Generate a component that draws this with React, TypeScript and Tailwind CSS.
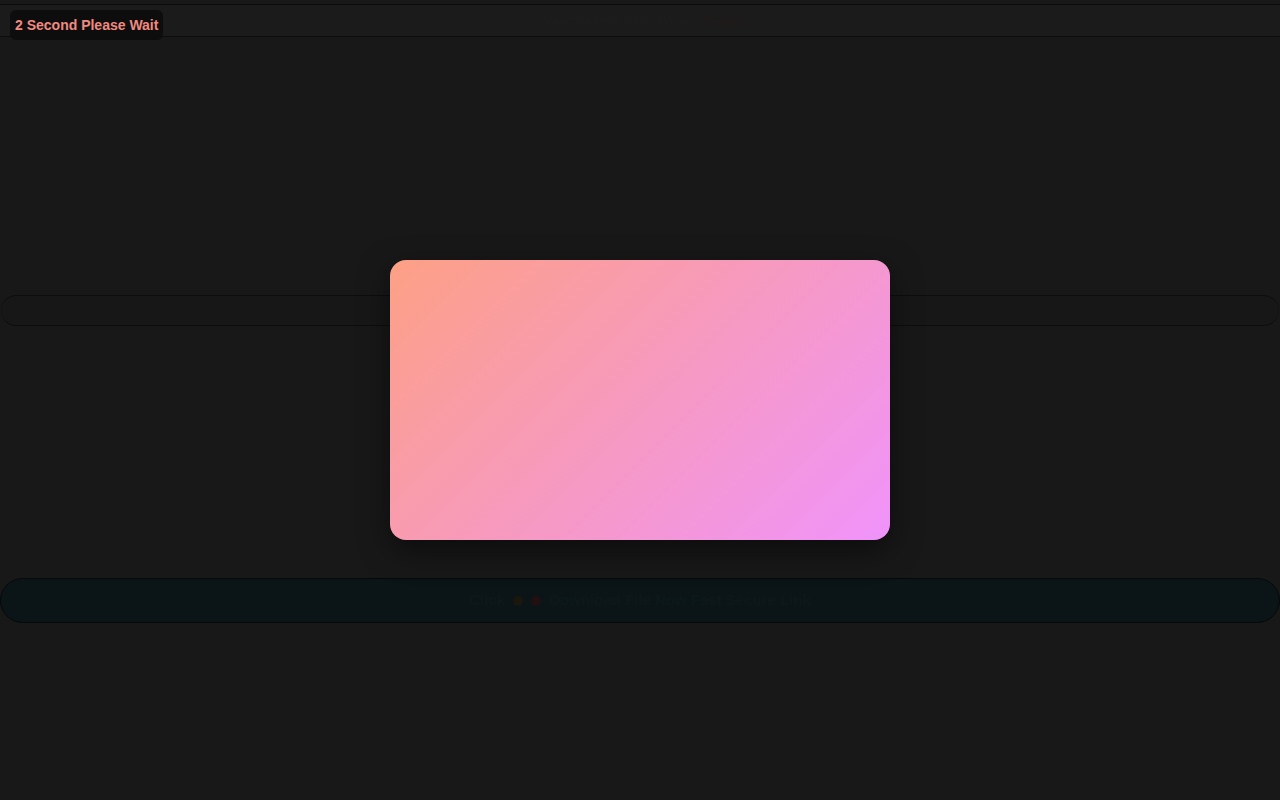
import React from 'react'

const App: React.FC = () => {
  return (
    <div
      className="relative min-h-screen w-full bg-[#181818] text-[#1f1f1f]"
      style={{ fontFamily: '"Liberation Sans", Arial, sans-serif' }}
    >
      {/* header */}
      <div className="pt-[4px]">
        <div className="flex h-[33px] items-center justify-center border-y border-[#0c0c0c] bg-[#1b1b1b] text-[13px] text-[#1d1d1d]">
          <span>Download will start shortly</span>
          <span className="ml-1 text-[#221a1a]">· Ready</span>
        </div>
      </div>

      {/* wait badge */}
      <div className="absolute left-[10px] top-[10px] rounded-md bg-[#0d0d0d] px-[5px] py-[6px] text-[14px] font-bold leading-[18px] text-[#f08a80]">
        2 Second Please Wait
      </div>

      {/* search bar */}
      <div className="mt-[258px] px-[1px]">
        <div className="h-[31px] rounded-full border-y border-[#0d0d0d] bg-[#171717]" />
      </div>

      {/* action bar */}
      <div className="mt-[252px]">
        <div className="flex h-[45px] items-center justify-center gap-2 rounded-full border border-[#06090a] bg-[#0b1518] text-[15px] font-bold text-[#0d181b]">
          <span>Click</span>
          <span className="h-[10px] w-[10px] rounded-full bg-[#1a170c]" />
          <span className="h-[10px] w-[10px] rounded-full bg-[#221010]" />
          <span>Download File Now Fast Secure Link</span>
        </div>
      </div>

      {/* overlay card */}
      <div className="fixed inset-0 flex items-center justify-center">
        <div className="h-[280px] w-[500px] rounded-2xl bg-[linear-gradient(135deg,#fda085_0%,#f093fb_100%)] shadow-[0_10px_30px_rgba(0,0,0,0.5)]" />
      </div>
    </div>
  )
}

export default App
